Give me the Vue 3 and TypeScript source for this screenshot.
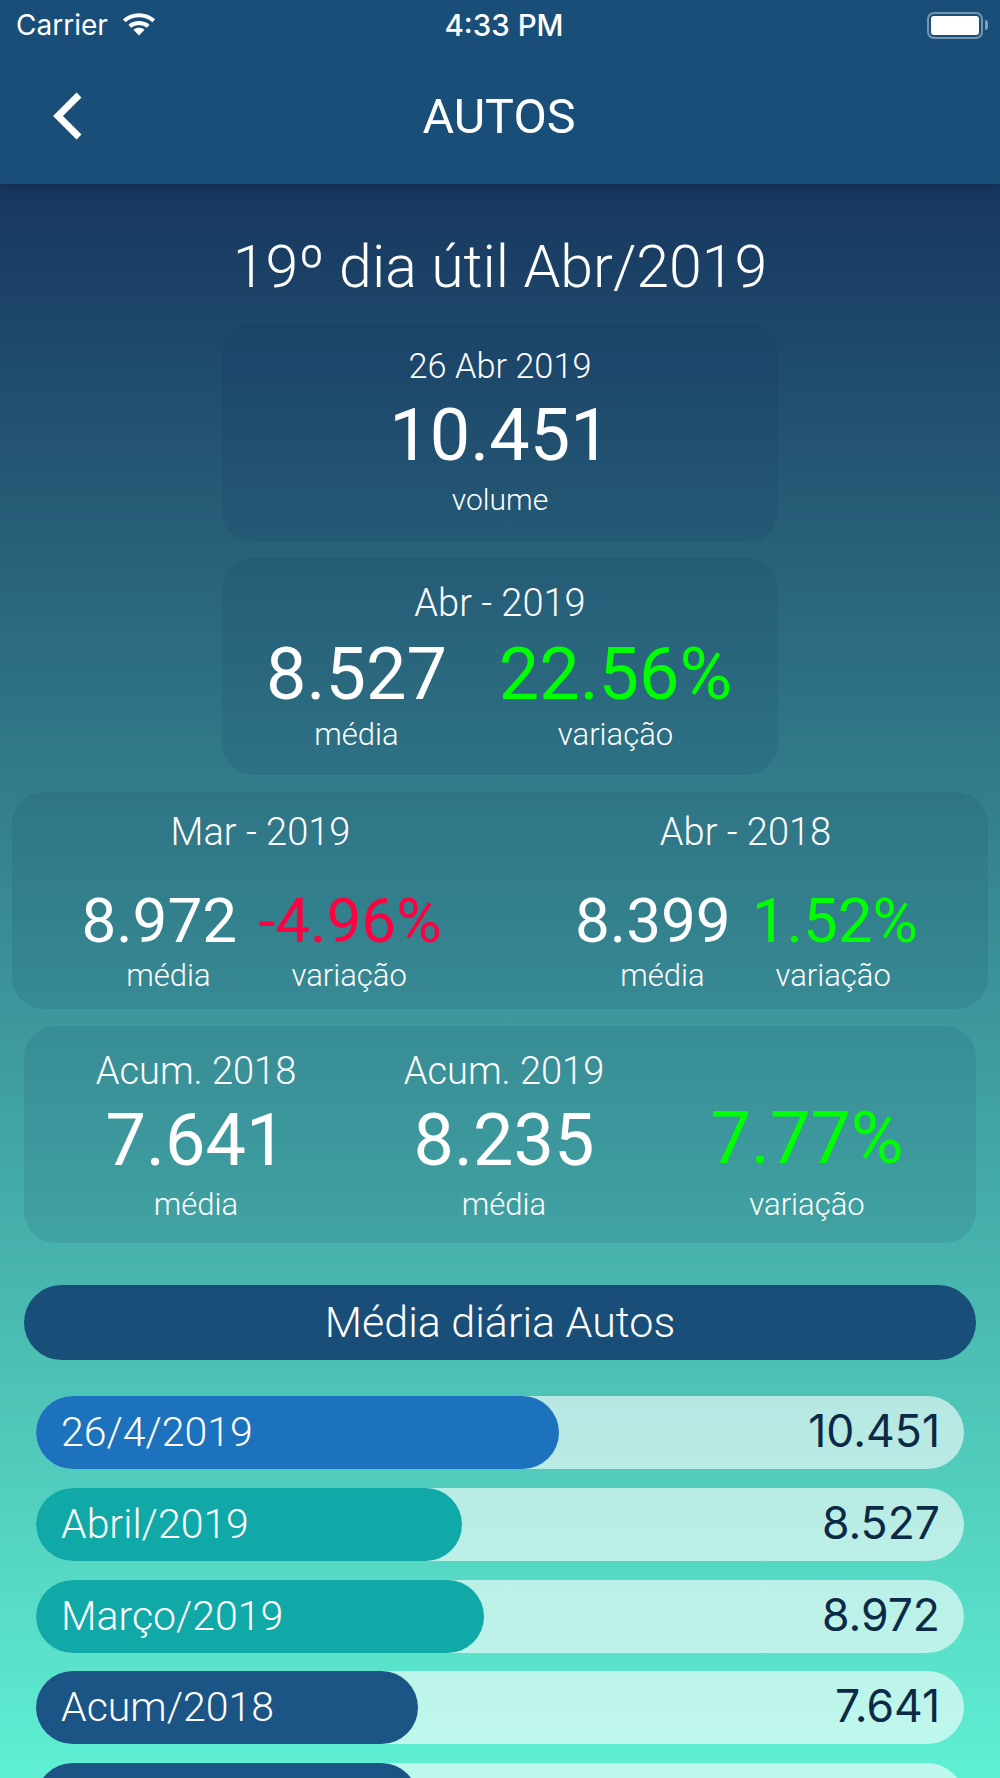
<template>
  <div class="screen">
    <header class="top">
      <div class="status">
        <div class="status-left">
          <span>Carrier</span>
          <svg class="wifi" viewBox="0 0 36 26" fill="none" stroke="#fff" stroke-width="4.4">
            <path d="M2 9.5C11 1.5 25 1.5 34 9.5" />
            <path d="M8 15.5C13.5 10.8 22.5 10.8 28 15.5" />
            <path d="M18 25.5L12 19.2C15.5 16.4 20.5 16.4 24 19.2Z" fill="#fff" stroke="none" />
          </svg>
        </div>
        <span class="clock">4:33 PM</span>
        <div class="battery">
          <div class="battery-body"><div class="battery-level"></div></div>
          <div class="battery-nub"></div>
        </div>
      </div>
      <div class="nav">
        <svg class="back" viewBox="0 0 30 48" fill="none" stroke="#fff" stroke-width="7">
          <path d="M26 3L5 24L26 45" />
        </svg>
        <span class="nav-title">AUTOS</span>
      </div>
    </header>

    <main class="content">
      <h1 class="headline">19º dia útil Abr/2019</h1>

      <section class="card card-narrow card-day">
        <div class="card-title">26 Abr 2019</div>
        <div class="num big">10.451</div>
        <div class="label">volume</div>
      </section>

      <section class="card card-narrow card-month">
        <div class="card-title large">Abr - 2019</div>
        <div class="month-grid">
          <div class="num big">8.527</div>
          <div class="num big up">22.56%</div>
          <div class="label">média</div>
          <div class="label">variação</div>
        </div>
      </section>

      <section class="card card-wide">
        <div v-for="c in compare" :key="c.title" class="compare">
          <div class="card-title large">{{ c.title }}</div>
          <div class="compare-nums">
            <span class="num mid">{{ c.value }}</span>
            <span class="num mid" :class="c.up ? 'up' : 'down'">{{ c.change }}</span>
          </div>
          <div class="compare-labels">
            <span class="label">média</span>
            <span class="label">variação</span>
          </div>
        </div>
      </section>

      <section class="card card-acum">
        <div class="acum-col">
          <div class="card-title large">Acum. 2018</div>
          <div class="num big">7.641</div>
          <div class="label">média</div>
        </div>
        <div class="acum-col">
          <div class="card-title large">Acum. 2019</div>
          <div class="num big">8.235</div>
          <div class="label">média</div>
        </div>
        <div class="acum-col">
          <div class="card-title large">&nbsp;</div>
          <div class="num big up">7.77%</div>
          <div class="label">variação</div>
        </div>
      </section>

      <div class="section-head">Média diária Autos</div>

      <div class="bars">
        <div v-for="b in bars" :key="b.id" class="bar">
          <div class="bar-fill" :class="b.tone" :style="{ width: b.width + 'px' }">{{ b.name }}</div>
          <span class="bar-value">{{ b.value }}</span>
        </div>
      </div>
    </main>
  </div>
</template>

<script setup lang="ts">
interface Bar {
  id: number
  name: string
  value: string
  width: number
  tone: string
}

const compare = [
  { title: 'Mar - 2019', value: '8.972', change: '-4.96%', up: false },
  { title: 'Abr - 2018', value: '8.399', change: '1.52%', up: true }
]

// last row runs off the bottom of the screen, only the top of its pill shows
const bars: Bar[] = [
  { id: 1, name: '26/4/2019', value: '10.451', width: 523, tone: 'blue' },
  { id: 2, name: 'Abril/2019', value: '8.527', width: 426, tone: 'teal' },
  { id: 3, name: 'Março/2019', value: '8.972', width: 448, tone: 'teal' },
  { id: 4, name: 'Acum/2018', value: '7.641', width: 382, tone: 'navy' },
  { id: 5, name: '', value: '', width: 382, tone: 'navy' }
]
</script>

<style>
html,
body {
  margin: 0;
  background: #5ff0d3;
}
</style>

<style scoped>
.screen {
  width: 1000px;
  height: 1778px;
  overflow: hidden;
  font-family: Roboto, "Liberation Sans", sans-serif;
  color: #fff;
  background: linear-gradient(180deg, #17365f 184px, #5ff0d3 1778px);
}

.top {
  height: 184px;
  background: #194e78;
  box-shadow: 0 2px 10px rgba(0, 0, 0, 0.2);
}

.status {
  height: 50px;
  padding: 0 12px 0 16px;
  display: flex;
  align-items: center;
  justify-content: space-between;
  position: relative;
  font-family: Inter, "Liberation Sans", sans-serif;
  font-size: 28px;
}

.status-left {
  display: flex;
  align-items: center;
  gap: 14px;
}

.wifi {
  width: 34px;
  height: 24px;
  margin-top: -2px;
}

.clock {
  position: absolute;
  left: 8px;
  right: 0;
  text-align: center;
  font-size: 29.5px;
  font-weight: 500;
}

.battery {
  display: flex;
  align-items: center;
  gap: 2px;
}

.battery-body {
  width: 56px;
  height: 27px;
  box-sizing: border-box;
  padding: 2px;
  border: 2px solid rgba(255, 255, 255, 0.4);
  border-radius: 7px;
}

.battery-level {
  height: 100%;
  background: #fff;
  border-radius: 3px;
}

.battery-nub {
  width: 3px;
  height: 10px;
  background: rgba(255, 255, 255, 0.45);
  border-radius: 0 3px 3px 0;
}

.nav {
  height: 134px;
  display: flex;
  align-items: center;
  justify-content: center;
  position: relative;
}

.back {
  position: absolute;
  left: 52px;
  top: 42px;
  width: 32px;
  height: 48px;
}

.nav-title {
  font-size: 48.5px;
  margin-top: -2px;
  margin-right: 2px;
}

.content {
  display: flex;
  flex-direction: column;
  align-items: center;
}

.headline {
  margin: 0;
  height: 139px;
  line-height: 166px;
  font-size: 59px;
  font-weight: 300;
}

.card {
  box-sizing: border-box;
  height: 217px;
  margin-bottom: 17px;
  border-radius: 32px;
  background: rgba(15, 45, 92, 0.11);
  text-align: center;
}

.card-narrow {
  width: 556px;
}

.card-day {
  height: 219px;
  margin-bottom: 16px;
  padding-top: 21px;
}

.card-day .num {
  margin: 12px 0 10px;
}

.card-day .label {
  font-size: 30px;
}

.card-month {
  padding-top: 23px;
}

.card-title {
  font-size: 34.3px;
  font-weight: 300;
  line-height: 44px;
}

.card-title.large {
  font-size: 38px;
}

.num {
  font-weight: 400;
  line-height: 1;
}

.num.big {
  font-size: 72px;
}

.num.mid {
  font-size: 62px;
}

.label {
  font-size: 31px;
  font-weight: 300;
  line-height: 36px;
}

.up {
  color: #00ff00;
}

.down {
  color: #ff0040;
}

.month-grid {
  display: grid;
  grid-template-columns: 259px 259px;
  justify-items: center;
  row-gap: 6px;
  margin-top: 14px;
  padding-left: 5px;
}

.card-wide {
  width: 976px;
  display: grid;
  grid-template-columns: 485px 485px;
  padding: 18px 0 0 6px;
}

.compare-nums {
  display: flex;
  justify-content: center;
  gap: 21px;
  margin-top: 36px;
  padding-left: 2px;
}

.compare-labels {
  display: flex;
  justify-content: center;
  gap: 81px;
  margin-top: 6px;
  padding-left: 12px;
}

.compare:last-child .compare-labels {
  gap: 71px;
  padding-left: 20px;
}

.card-acum {
  width: 952px;
  display: grid;
  grid-template-columns: 308px 308px 298px;
  padding: 23px 0 0 18px;
  margin-bottom: 42px;
}

.card-acum .num {
  margin: 12px 0 10px;
}

.acum-col:last-child .num {
  margin: 10px 0 12px;
}

.section-head {
  width: 952px;
  height: 75px;
  line-height: 75px;
  border-radius: 38px;
  background: #194e78;
  text-align: center;
  font-size: 43px;
  font-weight: 300;
}

.bars {
  width: 928px;
  margin-top: 36px;
  display: flex;
  flex-direction: column;
  gap: 18.75px;
}

.bar {
  flex: none;
  height: 73px;
  border-radius: 37px;
  background: rgba(255, 255, 255, 0.6);
  display: flex;
  align-items: center;
  justify-content: space-between;
}

.bar-fill {
  height: 100%;
  box-sizing: border-box;
  padding-left: 25px;
  border-radius: 37px;
  font-size: 41px;
  font-weight: 300;
  line-height: 73px;
}

.blue {
  background: #1d72bd;
}

.teal {
  background: #10a9a8;
}

.navy {
  background: #1b5586;
}

.bar-value {
  padding-right: 24px;
  margin-top: -3px;
  font-family: Inter, "Liberation Sans", sans-serif;
  font-size: 44.5px;
  color: #0b2a45;
}
</style>
